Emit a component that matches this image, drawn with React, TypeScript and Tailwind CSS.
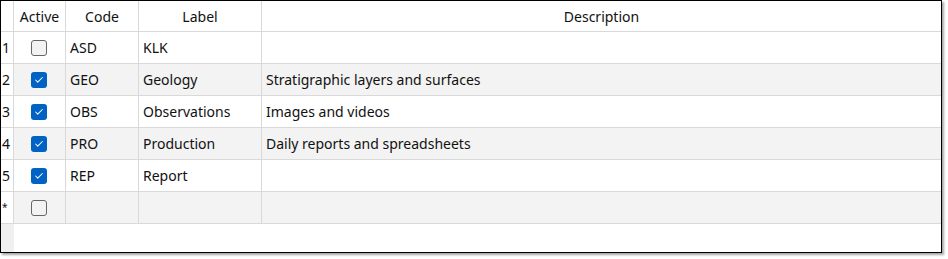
import { Check } from "lucide-react";

type Row = { idx: string; active: boolean; code: string; label: string; description: string };

const rows: Row[] = [
  { idx: "1", active: false, code: "ASD", label: "KLK", description: "" },
  { idx: "2", active: true, code: "GEO", label: "Geology", description: "Stratigraphic layers and surfaces" },
  { idx: "3", active: true, code: "OBS", label: "Observations", description: "Images and videos" },
  { idx: "4", active: true, code: "PRO", label: "Production", description: "Daily reports and spreadsheets" },
  { idx: "5", active: true, code: "REP", label: "Report", description: "" },
  { idx: "*", active: false, code: "", label: "", description: "" },
];

function Box({ checked }: { checked: boolean }) {
  if (checked) {
    return (
      <span className="flex h-4 w-4 items-center justify-center rounded-[3px] bg-[#0063c3]">
        <Check className="h-[10px] w-[10px] text-white" strokeWidth={2.5} />
      </span>
    );
  }
  return <span className="block h-4 w-4 rounded-[3px] border border-[#666] bg-[#f3f3f3]" />;
}

export default function App() {
  return (
    <div className="h-[259px] w-[948px] bg-white font-['Noto_Sans',sans-serif] text-[14px] text-[#111]">
      <div className="flex h-[253px] w-[942px] flex-col border border-black bg-white shadow-[2px_2px_2px_rgba(0,0,0,0.35)]">
        <div className="flex h-[31px] border-b border-[#d9d9d9]">
          <div className="w-[13px] border-r border-[#d9d9d9]" />
          <div className="flex w-[52px] items-center justify-center border-r border-[#d9d9d9]">Active</div>
          <div className="flex w-[73px] items-center justify-center border-r border-[#d9d9d9]">Code</div>
          <div className="flex w-[123px] items-center justify-center border-r border-[#d9d9d9]">Label</div>
          <div className="flex flex-1 items-center justify-center">Description</div>
        </div>
        {rows.map((r, i) => (
          <div key={r.idx} className={`flex h-[32px] border-b border-[#d9d9d9] ${i % 2 === 1 ? "bg-[#f3f3f3]" : "bg-white"}`}>
            <div className="flex w-[13px] items-center border-r border-[#d9d9d9] bg-white pl-[1px]">
              {r.idx === "*" ? <span className="text-[10px]">*</span> : r.idx}
            </div>
            <div className="flex w-[52px] items-center justify-center border-r border-[#d9d9d9] pr-[1px]">
              <Box checked={r.active} />
            </div>
            <div className="flex w-[73px] items-center border-r border-[#d9d9d9] pl-[4px]">{r.code}</div>
            <div className="flex w-[123px] items-center border-r border-[#d9d9d9] pl-[4px]">{r.label}</div>
            <div className="flex flex-1 items-center pl-[4px]">{r.description}</div>
          </div>
        ))}
        <div className="flex flex-1">
          <div className="w-[13px] bg-[#f0f0f0]" />
          <div className="flex-1" />
        </div>
      </div>
    </div>
  );
}
